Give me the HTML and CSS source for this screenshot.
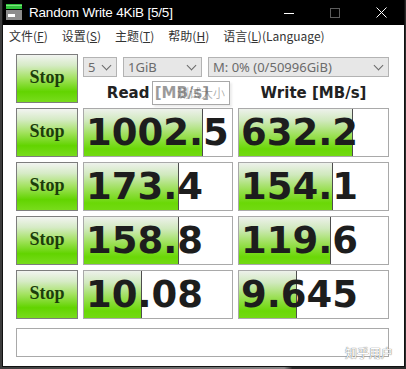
FILE: index.html
```html
<!DOCTYPE html>
<html lang="zh-CN">

<head>
   <meta charset="UTF-8">
   <meta name="viewport" content="width=device-width, initial-scale=1.0">
   <title>Random Write 4KiB [5/5]</title>
   <link rel="stylesheet" href="styles.css">
</head>

<body>
   <div class="window">
      <header class="titlebar">
         <svg class="titlebar__icon" width="16" height="16" viewBox="0 0 16 16">
            <rect x="0" y="0" width="16" height="5" fill="#2fc23a" />
            <rect x="0" y="1" width="16" height="1" fill="#7fe07f" />
            <rect x="0" y="6" width="16" height="10" fill="#8c8c8c" />
            <rect x="2" y="10" width="7" height="3" fill="#ffffff" />
         </svg>
         <span class="titlebar__title">Random Write 4KiB [5/5]</span>
         <div class="titlebar__controls">
            <span class="cap-btn">
               <svg width="10" height="10" viewBox="0 0 10 10"><path d="M0 5.5H10" stroke="#fff" /></svg>
            </span>
            <span class="cap-btn">
               <svg width="10" height="10" viewBox="0 0 10 10"><rect x="0.5" y="0.5" width="9" height="9" fill="none" stroke="#5c5c5c" /></svg>
            </span>
            <span class="cap-btn">
               <svg width="11" height="11" viewBox="0 0 11 11"><path d="M0.5 0.5L10.5 10.5M10.5 0.5L0.5 10.5" stroke="#fff" /></svg>
            </span>
         </div>
      </header>

      <nav class="menubar">
         <span class="menubar__item">文件(<u>F</u>)</span>
         <span class="menubar__item">设置(<u>S</u>)</span>
         <span class="menubar__item">主题(<u>T</u>)</span>
         <span class="menubar__item">帮助(<u>H</u>)</span>
         <span class="menubar__item">语言(<u>L</u>)(Language)</span>
      </nav>

      <main class="main">
         <div class="bench">
            <button class="stop" type="button">Stop</button>

            <div class="controls">
               <div class="selects">
                  <div class="select select--count">5<span class="select__arrow"></span></div>
                  <div class="select select--size">1GiB<span class="select__arrow"></span></div>
                  <div class="select select--drive">M: 0% (0/50996GiB)<span class="select__arrow"></span></div>
               </div>
               <div class="col-head col-head--read">
                  Read [MB/s]
                  <span class="tooltip">测试大小</span>
               </div>
               <div class="col-head">Write [MB/s]</div>
            </div>

            <button class="stop" type="button">Stop</button>
            <div class="result"><span class="result__fill" style="width: 80.5%"></span><span class="result__value">1002.5</span></div>
            <div class="result"><span class="result__fill" style="width: 76.5%"></span><span class="result__value">632.2</span></div>

            <button class="stop" type="button">Stop</button>
            <div class="result"><span class="result__fill" style="width: 64%"></span><span class="result__value">173.4</span></div>
            <div class="result"><span class="result__fill" style="width: 63%"></span><span class="result__value">154.1</span></div>

            <button class="stop" type="button">Stop</button>
            <div class="result"><span class="result__fill" style="width: 64%"></span><span class="result__value">158.8</span></div>
            <div class="result"><span class="result__fill" style="width: 62%"></span><span class="result__value">119.6</span></div>

            <button class="stop" type="button">Stop</button>
            <div class="result"><span class="result__fill" style="width: 39%"></span><span class="result__value">10.08</span></div>
            <div class="result"><span class="result__fill" style="width: 39%"></span><span class="result__value">9.645</span></div>

            <div class="progress"></div>
         </div>

         <span class="watermark">知乎用户</span>
      </main>
   </div>
</body>

</html>
```

FILE: styles.css
```css
*,
*::before,
*::after {
   box-sizing: border-box;
}

html,
body {
   margin: 0;
   padding: 0;
}

body {
   width: 406px;
   height: 369px;
   overflow: hidden;
   background: linear-gradient(to right, #3c3c3c 0%, #8a8a8a 70%, #2c2c2c 72%);
   font-family: "Noto Sans", "Noto Sans CJK SC", sans-serif;
}

.window {
   width: 403px;
   height: 367px;
   margin-left: 2px;
   background-color: #ffffff;
   border: 1px solid #111111;
   border-top: none;
   display: flex;
   flex-direction: column;
}

/* title bar */
.titlebar {
   height: 25px;
   background-color: #000000;
   color: #ffffff;
   display: flex;
   align-items: center;
   padding-left: 3px;
}

.titlebar__icon {
   flex: none;
   margin-top: -2px;
}

.titlebar__title {
   margin-left: 7px;
   font-family: "Liberation Sans", sans-serif;
   font-size: 13.5px;
   letter-spacing: -0.2px;
   line-height: 25px;
}

.titlebar__controls {
   margin-left: auto;
   display: flex;
   height: 100%;
}

.cap-btn {
   width: 46px;
   display: flex;
   align-items: center;
   justify-content: center;
}

/* menu */
.menubar {
   height: 21px;
   display: flex;
   align-items: center;
   gap: 14px;
   padding-left: 6px;
   font-family: "Noto Sans CJK SC", sans-serif;
   font-size: 12px;
   color: #333333;
}

.menubar__item u {
   text-underline-offset: 1px;
}

/* main */
.main {
   position: relative;
   flex: 1;
   padding: 8px 0 9px 13px;
}

.bench {
   display: grid;
   grid-template-columns: 62px 150px 151px;
   grid-template-rows: repeat(5, 49px) 33px;
   gap: 5px;
}

.stop {
   margin: 0;
   padding: 0 0 2px;
   border: 1px solid #7d7d7d;
   background: linear-gradient(to bottom, #f2f4f1 0%, #d6ebc6 22%, #a2e25e 50%, #62d400 78%, #78dc1c 100%);
   font-family: "Liberation Serif", serif;
   font-weight: bold;
   font-size: 18px;
   color: #1c3d0b;
   cursor: pointer;
}

.controls {
   grid-column: 2 / 4;
   display: grid;
   grid-template-columns: 150px 151px;
   grid-template-rows: 23px 1fr;
   column-gap: 5px;
}

.selects {
   grid-column: 1 / 3;
   display: flex;
   gap: 6px;
   padding-top: 3px;
}

.select {
   position: relative;
   height: 20px;
   border: 1px solid #b3b3b3;
   background-color: #e7e7e7;
   color: #6b6b6b;
   font-size: 13px;
   line-height: 18px;
   padding-left: 4px;
}

.select--count {
   width: 34px;
}

.select--size {
   width: 79px;
}

.select--drive {
   width: 181px;
}

.select__arrow {
   position: absolute;
   right: 6px;
   top: 4px;
   width: 7px;
   height: 7px;
   border-right: 1px solid #6a6a6a;
   border-bottom: 1px solid #6a6a6a;
   transform: rotate(45deg);
}

.col-head {
   position: relative;
   text-align: center;
   padding-top: 7px;
   font-family: "DejaVu Sans", sans-serif;
   font-weight: bold;
   font-size: 15px;
   line-height: 18px;
   color: #222222;
}

.tooltip {
   position: absolute;
   left: 69px;
   top: 4px;
   width: 78px;
   height: 24px;
   padding: 0 4px;
   border: 1px solid rgba(110, 110, 110, 0.6);
   background-color: rgba(255, 255, 255, 0.55);
   box-shadow: 2px 2px 2px rgba(0, 0, 0, 0.08);
   font-family: "Noto Sans CJK SC", sans-serif;
   font-weight: normal;
   font-size: 12px;
   line-height: 22px;
   color: rgba(60, 60, 60, 0.4);
   text-align: right;
   white-space: nowrap;
}

.result {
   position: relative;
   overflow: hidden;
   border: 1px solid #a9a9a9;
   background-color: #ffffff;
}

.result__fill {
   position: absolute;
   left: 0;
   top: 0;
   bottom: 0;
   border-right: 1px solid #4d4d4d;
   background: linear-gradient(to bottom, #edf1eb 0%, #d0e9bd 25%, #9de059 55%, #6ad806 85%, #72da12 100%);
}

.result__value {
   position: relative;
   display: block;
   padding-left: 2px;
   font-family: "DejaVu Sans", sans-serif;
   font-weight: bold;
   font-size: 37px;
   line-height: 47px;
   color: #1d1d1d;
   white-space: nowrap;
}

.progress {
   grid-column: 1 / 4;
   margin-top: 4px;
   height: 29px;
   border: 1px solid #a9a9a9;
   background-color: #ffffff;
}

.watermark {
   position: absolute;
   right: 11px;
   bottom: 6px;
   font-family: "Noto Sans CJK SC", sans-serif;
   font-size: 12px;
   line-height: 14px;
   color: #ffffff;
   text-shadow: 0 0 1px #777777, 0 0 1px #777777;
}
```
